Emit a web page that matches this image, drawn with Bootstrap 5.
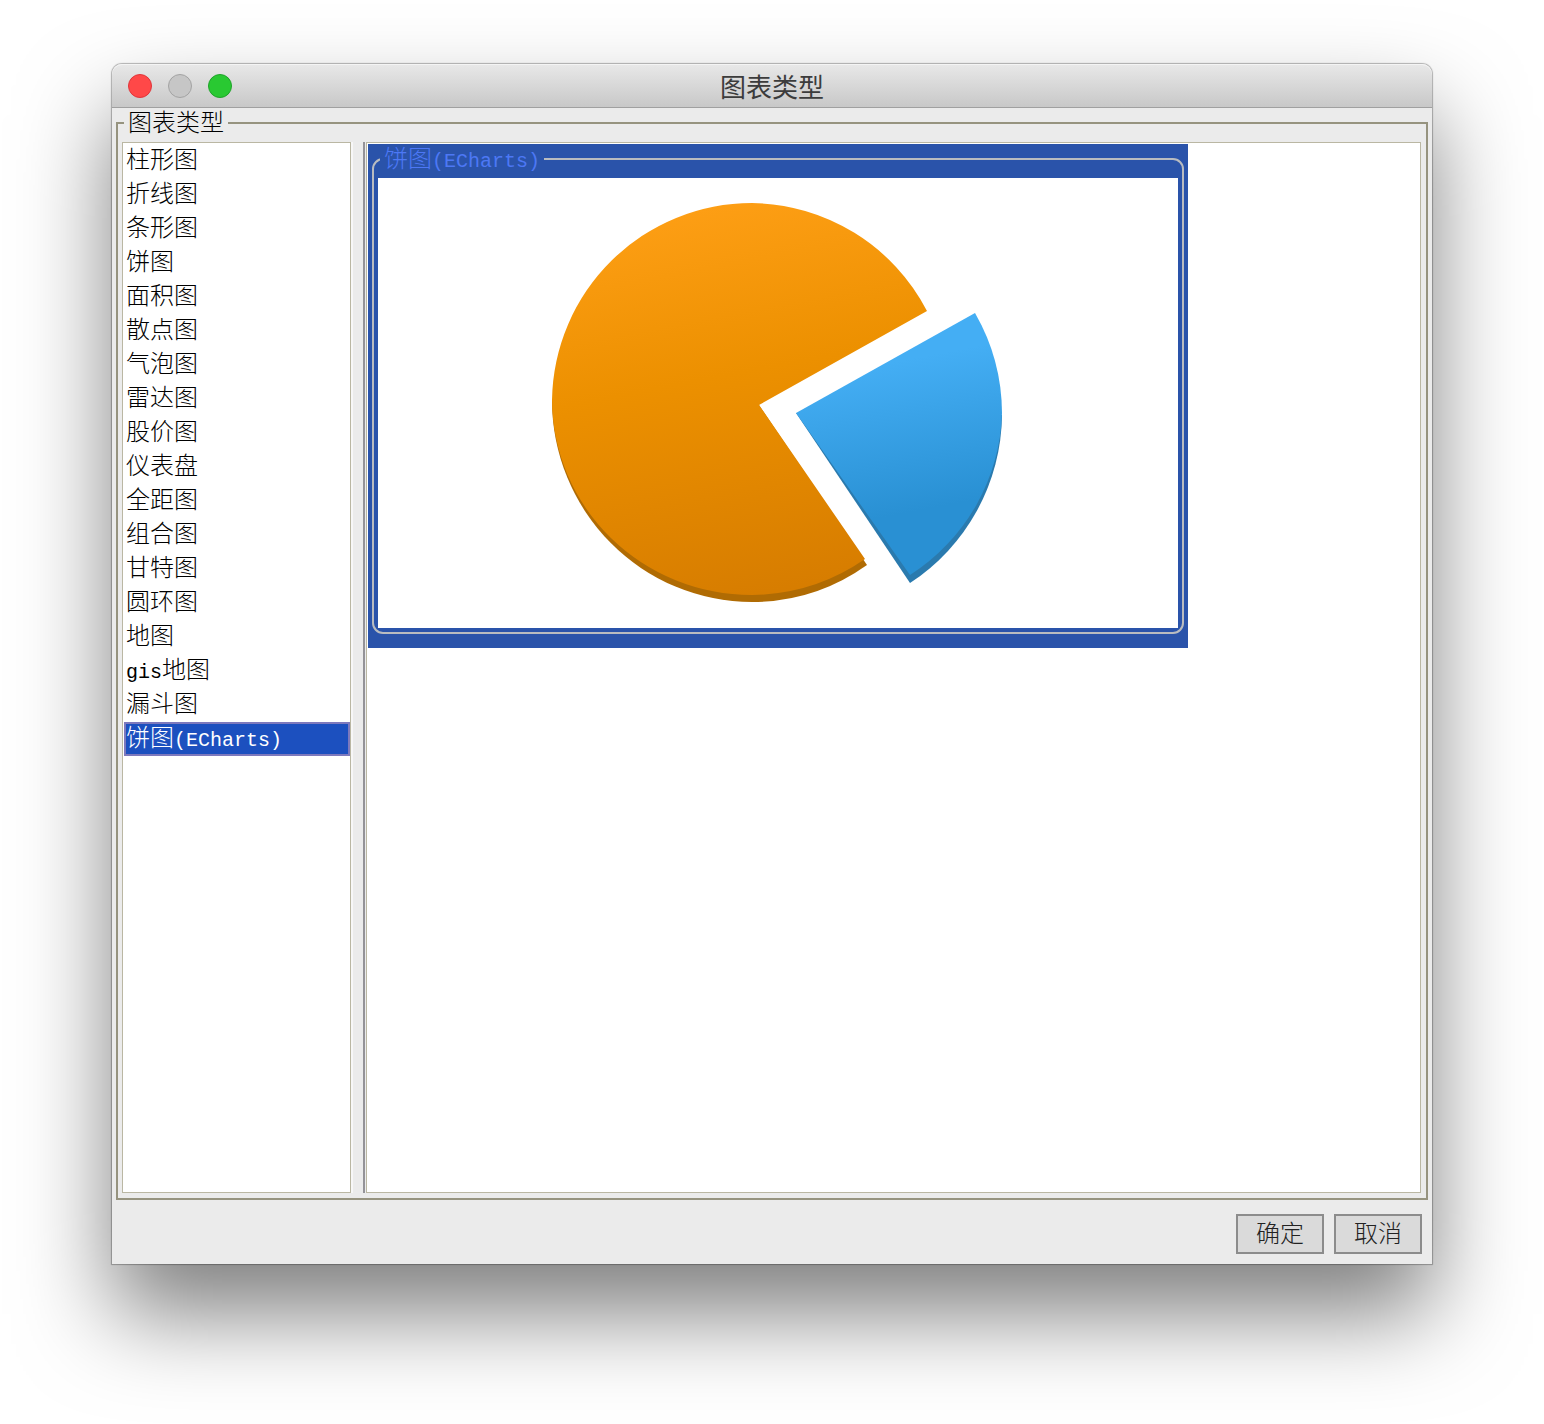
<!DOCTYPE html>
<html lang="zh-CN">
<head>
<meta charset="utf-8">
<meta name="viewport" content="width=device-width, initial-scale=1">
<title>图表类型</title>
<link href="https://cdn.jsdelivr.net/npm/bootstrap@5.3.0/dist/css/bootstrap.min.css" rel="stylesheet">
<style>
body { background: #fff; color: #000; font-family: "Liberation Serif", "Noto Sans CJK SC", serif; font-size: 24px; font-weight: 300; }
.desktop { padding: 64px 112px 160px; }
.dialog-window { background: #ebebeb; border-radius: 10px 10px 0 0; box-shadow: 0 0 1px 1px rgba(0,0,0,.28), 0 50px 92px rgba(0,0,0,.5); }
.title-bar { height: 44px; padding: 0 16px; border-radius: 10px 10px 0 0; border-bottom: 1px solid #a0a0a0; background: linear-gradient(#e8e8e8, #c8c8c8); box-shadow: inset 0 1px #f4f4f4; }
.title-bar h1 { font: 400 26px/40px "Noto Sans CJK SC", sans-serif; color: #3c3c3c; }
.light { width: 24px; height: 24px; padding: 0; border-radius: 50%; border: 1px solid #a3a3a3; background: #c6c6c6; }
.light-close { background: #ff4848; border-color: #e0353a; }
.light-zoom { background: #29c932; border-color: #1fa32a; }
.latin { font-family: "Liberation Mono", monospace; font-size: 20px; font-weight: 400; line-height: 1; }
.type-box { margin: 0 4px; border: 2px solid #96937f; padding: 4px 5px 5px 4px; }
.box-title { float: none; width: auto; margin: 0 0 0 2px; padding: 0 4px; font-size: 24px; line-height: 30px; }
.panes { min-height: calc(100vh - 373px); }
.type-list { width: 229px; padding: 1px 0 1px 1px; border: 1px solid #bab7a3; background: #fff; border-radius: 0; }
.type-list .list-group-item { height: 34px; padding: 0 2px 2px; border: 0; line-height: 32px; font-weight: 300; color: #000; background: #fff; }
.type-list .list-group-item.active { border: 2px solid #7d79bd; margin: 0; padding: 0 0 2px; line-height: 28px; background: #1c50bf; color: #fff; }
.splitter { width: 14px; margin-right: 1px; border-left: 2px solid #f7f7f7; border-right: 2px solid #949398; }
.preview-pane { border: 1px solid #bab7a3; padding: 1px; background: #fff; min-width: 0; }
.preview-card { max-width: 820px; padding: 0 4px 14px; background: #2a53aa; }
.preview-card fieldset { border: 2px solid #b9bcc0; border-radius: 11px; padding: 4px; }
.preview-card .box-title { color: #4d78f5; }
.preview-card svg { width: 100%; background: #fff; }
.actions { gap: 10px; padding: 14px 10px 10px; }
.actions .btn { width: 88px; height: 40px; padding: 0; border: 2px solid #8c8c8c; border-radius: 0; background: #dadada; color: #222; font-size: 24px; font-weight: 300; line-height: 34px; }
</style>
<script src="https://cdn.jsdelivr.net/npm/bootstrap@5.3.0/dist/js/bootstrap.bundle.min.js"></script>
</head>
<body>
<main class="desktop min-vh-100 d-flex flex-column">
  <section class="dialog-window flex-grow-1 d-flex flex-column" role="dialog" aria-labelledby="dialog-title">
    <header class="title-bar d-flex align-items-center">
      <div class="col d-flex gap-3">
        <button type="button" class="light light-close" aria-label="关闭"></button>
        <button type="button" class="light" aria-label="最小化" disabled></button>
        <button type="button" class="light light-zoom" aria-label="缩放"></button>
      </div>
      <h1 class="m-0" id="dialog-title">图表类型</h1>
      <div class="col"></div>
    </header>
    <fieldset class="type-box">
      <legend class="box-title">图表类型</legend>
      <div class="panes d-flex">
        <div class="list-group type-list flex-shrink-0">
          <button type="button" class="list-group-item list-group-item-action">柱形图</button>
          <button type="button" class="list-group-item list-group-item-action">折线图</button>
          <button type="button" class="list-group-item list-group-item-action">条形图</button>
          <button type="button" class="list-group-item list-group-item-action">饼图</button>
          <button type="button" class="list-group-item list-group-item-action">面积图</button>
          <button type="button" class="list-group-item list-group-item-action">散点图</button>
          <button type="button" class="list-group-item list-group-item-action">气泡图</button>
          <button type="button" class="list-group-item list-group-item-action">雷达图</button>
          <button type="button" class="list-group-item list-group-item-action">股价图</button>
          <button type="button" class="list-group-item list-group-item-action">仪表盘</button>
          <button type="button" class="list-group-item list-group-item-action">全距图</button>
          <button type="button" class="list-group-item list-group-item-action">组合图</button>
          <button type="button" class="list-group-item list-group-item-action">甘特图</button>
          <button type="button" class="list-group-item list-group-item-action">圆环图</button>
          <button type="button" class="list-group-item list-group-item-action">地图</button>
          <button type="button" class="list-group-item list-group-item-action"><span class="latin">gis</span>地图</button>
          <button type="button" class="list-group-item list-group-item-action">漏斗图</button>
          <button type="button" class="list-group-item list-group-item-action active" aria-current="true">饼图<span class="latin">(ECharts)</span></button>
        </div>
        <div class="splitter flex-shrink-0"></div>
        <div class="preview-pane flex-grow-1">
          <div class="preview-card">
            <fieldset>
              <legend class="box-title">饼图<span class="latin">(ECharts)</span></legend>
              <svg class="d-block" viewBox="0 0 800 450" role="img" aria-label="饼图">
                <defs>
                  <linearGradient id="orange" gradientUnits="userSpaceOnUse" x1="340" y1="28" x2="415" y2="420">
                    <stop offset="0" stop-color="#fd9e14"/><stop offset=".42" stop-color="#ec9000"/><stop offset="1" stop-color="#d67c00"/>
                  </linearGradient>
                  <linearGradient id="blue" gradientUnits="userSpaceOnUse" x1="500" y1="187" x2="528" y2="335">
                    <stop offset="0" stop-color="#44aef4"/><stop offset="1" stop-color="#2990d3"/>
                  </linearGradient>
                </defs>
                <path fill="#b06b03" d="M381 227L174 222A200 202 0 0 0 374 424A200 202 0 0 0 489 387Z"/>
                <path fill="url(#orange)" d="M381 227L549 133A200 200 0 0 0 374 25A200 200 0 0 0 174 222A200 196 0 0 0 374 417A200 196 0 0 0 487 381Z"/>
                <path fill="#2a7aae" d="M418 235L624 237A203 203 0 0 1 532 405Z"/>
                <path fill="url(#blue)" d="M418 235L597 135A203 203 0 0 1 624 235A203 200 0 0 1 532 397Z"/>
              </svg>
            </fieldset>
          </div>
        </div>
      </div>
    </fieldset>
    <footer class="actions d-flex justify-content-end">
      <button type="button" class="btn">确定</button>
      <button type="button" class="btn">取消</button>
    </footer>
  </section>
</main>
</body>
</html>
